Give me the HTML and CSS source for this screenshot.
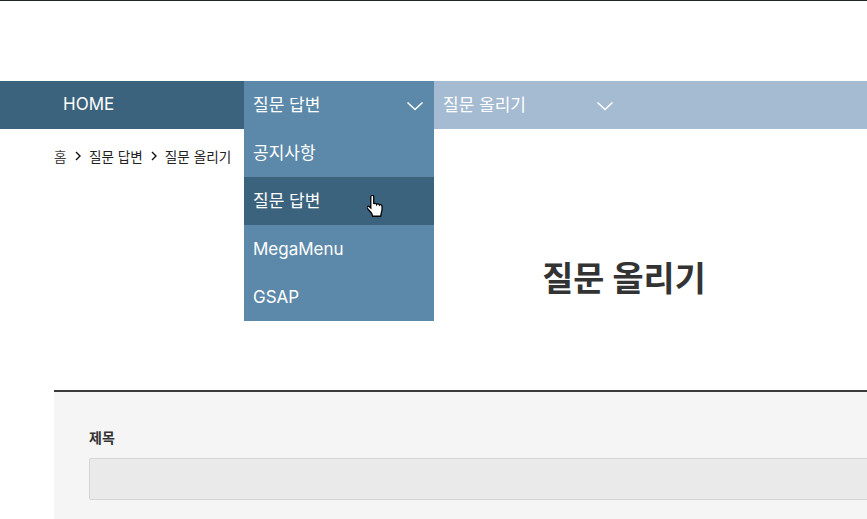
FILE: index.html
```html
<!DOCTYPE html>
<html lang="ko">
<head>
<meta charset="utf-8">
<title>질문 올리기</title>
<link rel="stylesheet" href="styles.css">
</head>
<body>
<header class="top"></header>
<nav class="nav">
  <a class="home">HOME</a>
  <div class="menu active">
    <span>질문 답변</span>
    <svg class="chev" viewBox="0 0 18 10"><path d="M1.500 1.500 9 8.500l7.500-7"/></svg>
    <ul class="drop">
      <li>공지사항</li>
      <li class="hover">질문 답변
        <svg class="hand" viewBox="1.200 0.700 13.800 19.800"><path d="M5 1.200c.8-.7 2-.2 2 1V8.500c.3-.9 2.300-1 2.500.3.400-.8 2.200-.7 2.400.5.500-.6 2.100-.4 2.200.8.200 2 .1 4.500-.6 6.200l-.5 2.700H6l-.5-2c-1-1.500-3-3.500-4-5-.6-1 .4-2 1.500-1.400L4.500 12V2.500c0-.5.100-1 .5-1.300Z"/></svg>
      </li>
      <li>MegaMenu</li>
      <li>GSAP</li>
    </ul>
  </div>
  <div class="menu current">
    <span>질문 올리기</span>
    <svg class="chev" viewBox="0 0 18 10"><path d="M1.500 1.500 9 8.500l7.500-7"/></svg>
  </div>
</nav>
<main class="page">
  <ol class="crumbs">
    <li class="home-crumb">홈</li>
    <li class="sep"><svg viewBox="0 0 6 10"><path d="M1 1l4 4-4 4"/></svg></li>
    <li>질문 답변</li>
    <li class="sep"><svg viewBox="0 0 6 10"><path d="M1 1l4 4-4 4"/></svg></li>
    <li>질문 올리기</li>
  </ol>
  <h1 class="title">질문 올리기</h1>
  <form class="form">
    <label class="label" for="subject">제목</label>
    <input class="input" id="subject" type="text" disabled>
  </form>
</main>
</body>
</html>
```
FILE: styles.css
```css
* { box-sizing: border-box; }
html, body { margin: 0; height: 100%; overflow: hidden; background: #fff; }
body { font-family: Inter, "Noto Sans CJK KR", sans-serif; color: #333; }
.top { height: 81px; border-top: 1px solid #212529; }
.nav { display: flex; height: 48px; background: #a5bbd2; color: #fff; font-size: 17px; position: relative; z-index: 2; }
.home { width: 244px; padding-left: 63px; background: #3c637d; line-height: 47px; }
.menu { width: 190px; display: flex; justify-content: space-between; align-items: center; padding: 0 10px 0 9px; position: relative; }
.menu > span { line-height: 47px; }
.menu.active { background: #5c89a9; }
.menu.current { padding-right: 0; width: 180px; }
.chev { width: 18px; height: 10px; fill: none; stroke: #fff; stroke-width: 1.600; margin-top: 2px; }
.drop { position: absolute; left: 0; top: 48px; width: 190px; margin: 0; padding: 0; list-style: none; background: #5c89a9; }
.drop li { height: 48px; line-height: 48px; padding-left: 9px; position: relative; }
.drop li.hover { background: #3c637d; }
.hand { position: absolute; left: 123px; top: 18px; width: 16px; height: 23px; fill: #fff; stroke: #000; stroke-width: 1.100; }
.page { width: 1140px; margin-left: 54px; }
.crumbs { display: flex; align-items: center; height: 20px; margin: 17px 0 0; padding: 0; list-style: none; font-size: 13.600px; color: #222; }
.home-crumb { width: 13px; color: #444; }
.sep { width: 22px; display: flex; justify-content: center; }
.sep svg { width: 6px; height: 10px; fill: none; stroke: #111; stroke-width: 1.400; }
.title { margin: 88px 0 0; text-align: center; font-size: 33.800px; line-height: 50px; font-weight: 700; color: #333; }
.form { margin-top: 86px; padding: 35px; height: 200px; background: #f5f5f5; border-top: 2px solid #3a3a3a; }
.label { display: block; font-size: 14px; font-weight: 700; line-height: 22px; color: #333; }
.input { display: block; width: 100%; height: 42px; margin-top: 9px; background: #eaeaea; border: 1px solid #d5d5d5; border-radius: 2px; }
```
